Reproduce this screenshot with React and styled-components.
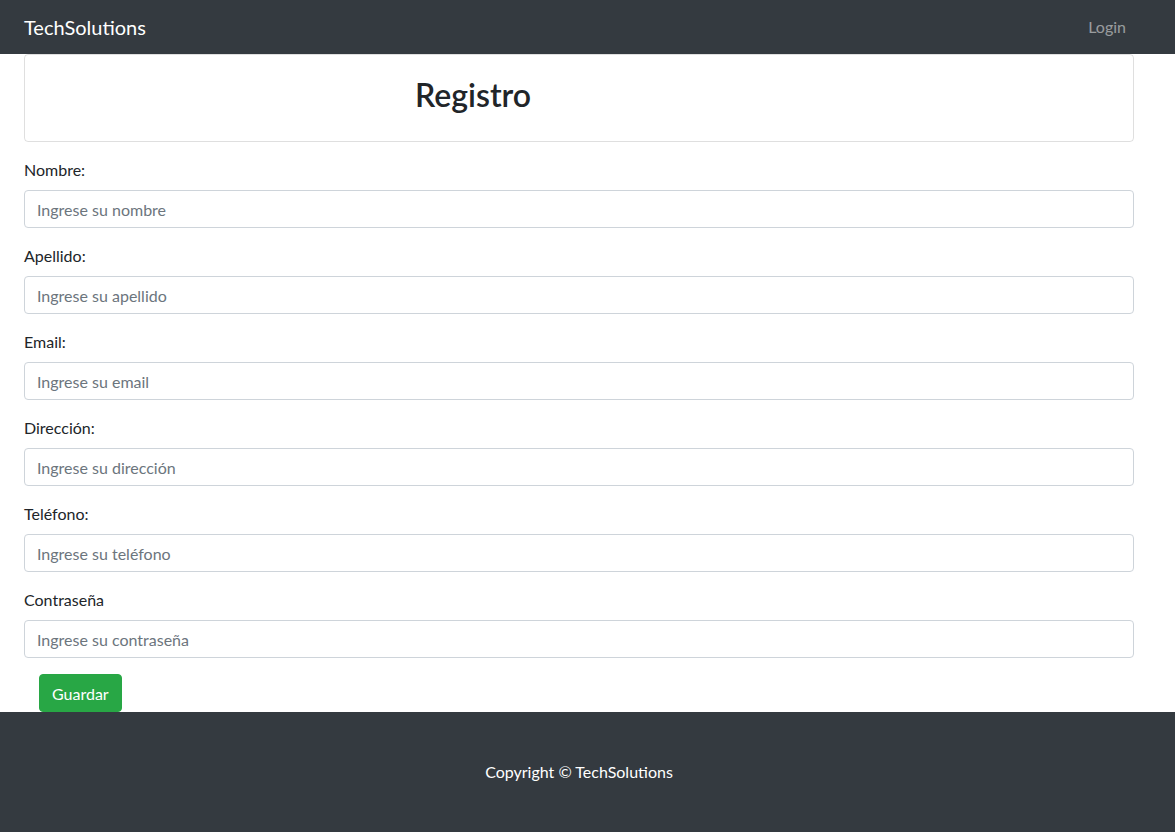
import React from "react";
import styled, { createGlobalStyle } from "styled-components";

const Global = createGlobalStyle`
  html, body { margin: 0; padding: 0; background: #fff; }
  body {
    font-family: "Lato", "Open Sans", "Liberation Sans", sans-serif;
    font-size: 16px;
    line-height: 1.5;
    color: #212529;
  }
  * { box-sizing: border-box; }
`;

const Page = styled.div`
  display: flex;
  flex-direction: column;
`;

const Navbar = styled.nav`
  background: #343a40;
  height: 54px;
  display: flex;
  align-items: center;
`;

const NavInner = styled.div`
  width: 1110px;
  margin-left: 24px;
  display: flex;
  align-items: center;
  justify-content: space-between;
`;

const Brand = styled.a`
  color: #fff;
  font-size: 20px;
  line-height: 30px;
  text-decoration: none;
`;

const NavLink = styled.a`
  color: rgba(255, 255, 255, 0.5);
  font-size: 16px;
  padding: 8px;
  text-decoration: none;
`;

const Main = styled.main`
  width: 1110px;
  margin-left: 24px;
  display: flex;
  flex-direction: column;
`;

const Card = styled.div`
  border: 1px solid rgba(0, 0, 0, 0.125);
  border-radius: 4px;
  padding: 21px 20px 19px;
  height: 88px;
`;

const Title = styled.h2`
  margin: 0;
  padding-left: 370px;
  font-size: 32px;
  font-weight: 600;
  line-height: 1.2;
`;

const Form = styled.form`
  display: flex;
  flex-direction: column;
  padding-top: 16px;
`;

const Group = styled.div`
  display: flex;
  flex-direction: column;
  margin-bottom: 16px;
`;

const Label = styled.label`
  font-size: 16px;
  line-height: 24px;
  margin-bottom: 8px;
`;

const Input = styled.input`
  height: 38px;
  padding: 6px 12px;
  font-size: 16px;
  font-family: inherit;
  color: #495057;
  border: 1px solid #ced4da;
  border-radius: 4px;
  &::placeholder { color: #6c757d; opacity: 1; }
`;

const Button = styled.button`
  align-self: flex-start;
  margin-left: 15px;
  height: 38px;
  padding: 6px 12px;
  background: #28a745;
  border: 1px solid #28a745;
  border-radius: 4px;
  color: #fff;
  font-size: 16px;
  font-family: inherit;
`;

const Footer = styled.footer`
  background: #343a40;
  height: 120px;
  display: flex;
  align-items: center;
`;

const FooterText = styled.p`
  width: 1110px;
  margin: 0 0 0 24px;
  text-align: center;
  color: #fff;
  font-size: 16px;
`;

const fields = [
  ["Nombre:", "Ingrese su nombre", "text"],
  ["Apellido:", "Ingrese su apellido", "text"],
  ["Email:", "Ingrese su email", "email"],
  ["Dirección:", "Ingrese su dirección", "text"],
  ["Teléfono:", "Ingrese su teléfono", "text"],
  ["Contraseña", "Ingrese su contraseña", "password"],
];

export default function App() {
  return (
    <Page>
      <Global />
      <Navbar>
        <NavInner>
          <Brand href="#">TechSolutions</Brand>
          <NavLink href="#">Login</NavLink>
        </NavInner>
      </Navbar>
      <Main>
        <Card>
          <Title>Registro</Title>
        </Card>
        <Form onSubmit={(e) => e.preventDefault()}>
          {fields.map(([label, ph, type]) => (
            <Group key={label}>
              <Label>{label}</Label>
              <Input type={type} placeholder={ph} />
            </Group>
          ))}
          <Button type="submit">Guardar</Button>
        </Form>
      </Main>
      <Footer>
        <FooterText>Copyright © TechSolutions</FooterText>
      </Footer>
    </Page>
  );
}
